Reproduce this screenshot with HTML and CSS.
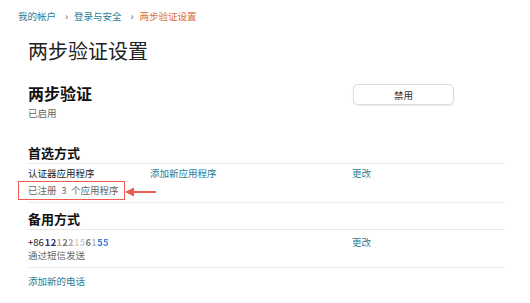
FILE: index.html
```html
<!DOCTYPE html>
<html lang="zh-CN">
<head>
<meta charset="utf-8">
<link rel="stylesheet" href="styles.css">
</head>
<body>
<div class="page">
  <nav class="crumbs">
    <a class="link">我的帐户</a>
    <span class="sep">›</span>
    <a class="link">登录与安全</a>
    <span class="sep">›</span>
    <span class="current">两步验证设置</span>
  </nav>

  <main class="content">
    <h1 class="title">两步验证设置</h1>

    <section class="status">
      <div class="status-text">
        <div class="h2">两步验证</div>
        <div class="muted">已启用</div>
      </div>
      <div></div>
      <div><button class="btn">禁用</button></div>
    </section>

    <h3 class="h3 first">首选方式</h3>
    <div class="row app-row">
      <div>
        <div class="line">认证器应用程序</div>
        <div class="line muted spaced">已注册 3 个应用程序</div>
      </div>
      <div class="line"><a class="link">添加新应用程序</a></div>
      <div class="line"><a class="link">更改</a></div>
    </div>

    <h3 class="h3 second">备用方式</h3>
    <div class="row phone-row">
      <div>
        <div class="pline">+86<span class="blur"><i class="p1">1</i><i class="p2">2</i><i class="p3">1</i><i class="p4">2</i><i class="p5">2</i><i class="p6">1</i><i class="p7">5</i><i class="p8">6</i><i class="p9">1</i><i class="p10">5</i><i class="p11">5</i></span></div>
        <div class="pline muted">通过短信发送</div>
      </div>
      <div></div>
      <div class="pline"><a class="link">更改</a></div>
    </div>

    <div class="add"><a class="link">添加新的电话</a></div>
  </main>

  <div class="highlight"></div>
  <svg class="arrow" width="32" height="12" viewBox="0 0 32 12">
    <line x1="8" y1="6" x2="31" y2="6" stroke="#ee5a50" stroke-width="2"/>
    <polygon points="0,6 9,1.5 9,10.5" fill="#ee5a50"/>
  </svg>
</div>
</body>
</html>
```
FILE: styles.css
```css
* { box-sizing: border-box; }
html, body { margin: 0; padding: 0; background: #fff; }
body {
  font-family: "Noto Sans CJK SC", "Noto Sans", "Liberation Sans", sans-serif;
  color: #222;
  font-size: 9.5px;
}
.page { position: relative; width: 530px; height: 303px; overflow: hidden; }

.crumbs {
  display: flex;
  align-items: center;
  padding: 8px 0 0 18px;
  height: 24px;
  line-height: 16px;
  font-size: 9.5px;
}
.sep { color: #555; margin: 0 6px 0 9px; font-size: 10px; }
.current { color: #d9703d; }
.link { color: #267d98; text-decoration: none; }

.content { padding-left: 28px; width: 505px; }

.title {
  margin: 13px 0 0;
  font-size: 20px;
  line-height: 28px;
  font-weight: 400;
  color: #222;
}

.status, .row {
  display: grid;
  grid-template-columns: 122px 202px 1fr;
}
.status { margin-top: 17px; }
.h2 { font-size: 16px; line-height: 22px; font-weight: 700; color: #111; }
.muted { color: #666; }
.status .muted { line-height: 18px; }

.btn {
  margin-top: 2px;
  margin-left: 1px;
  width: 101px;
  height: 21px;
  border: 1px solid #dcdcdc;
  border-radius: 5px;
  background: #fff;
  box-shadow: 0 1px 2px rgba(0,0,0,0.08);
  font-family: inherit;
  font-size: 9.5px;
  color: #333;
  padding: 0;
}

.h3 {
  margin: 0;
  font-size: 13px;
  line-height: 20px;
  font-weight: 700;
  color: #111;
  border-bottom: 1px solid #e8e8e8;
}
.h3.first { margin-top: 21px; }
.h3.second { margin-top: 6px; }

.app-row { padding: 1px 0 3px; border-bottom: 1px solid #ececec; }
.line { line-height: 17px; }
.spaced { word-spacing: 2.5px; }

.phone-row { padding: 5.5px 0 5.5px; border-bottom: 1px solid #ececec; }
.pline { line-height: 13px; }

.blur { margin-left: 1px; }
.blur i { font-style: normal; font-weight: 700; letter-spacing: 0.2px; filter: blur(0.5px); }
.p1 { color: #2a3d8a; } .p2 { color: #23337a; } .p3 { color: #d0a878; } .p4 { color: #777; }
.p5 { color: #aaa; } .p6 { color: #f5cda6; } .p7 { color: #c3d2ee; } .p8 { color: #777; }
.p9 { color: #b8bfcc; } .p10 { color: #3a78c8; } .p11 { color: #4a8ad8; }

.add { margin-top: 5px; line-height: 16px; }

.highlight {
  position: absolute;
  left: 18px;
  top: 181px;
  width: 107px;
  height: 19px;
  border: 1.5px solid #ee5a50;
}
.arrow { position: absolute; left: 125px; top: 186px; }
```
